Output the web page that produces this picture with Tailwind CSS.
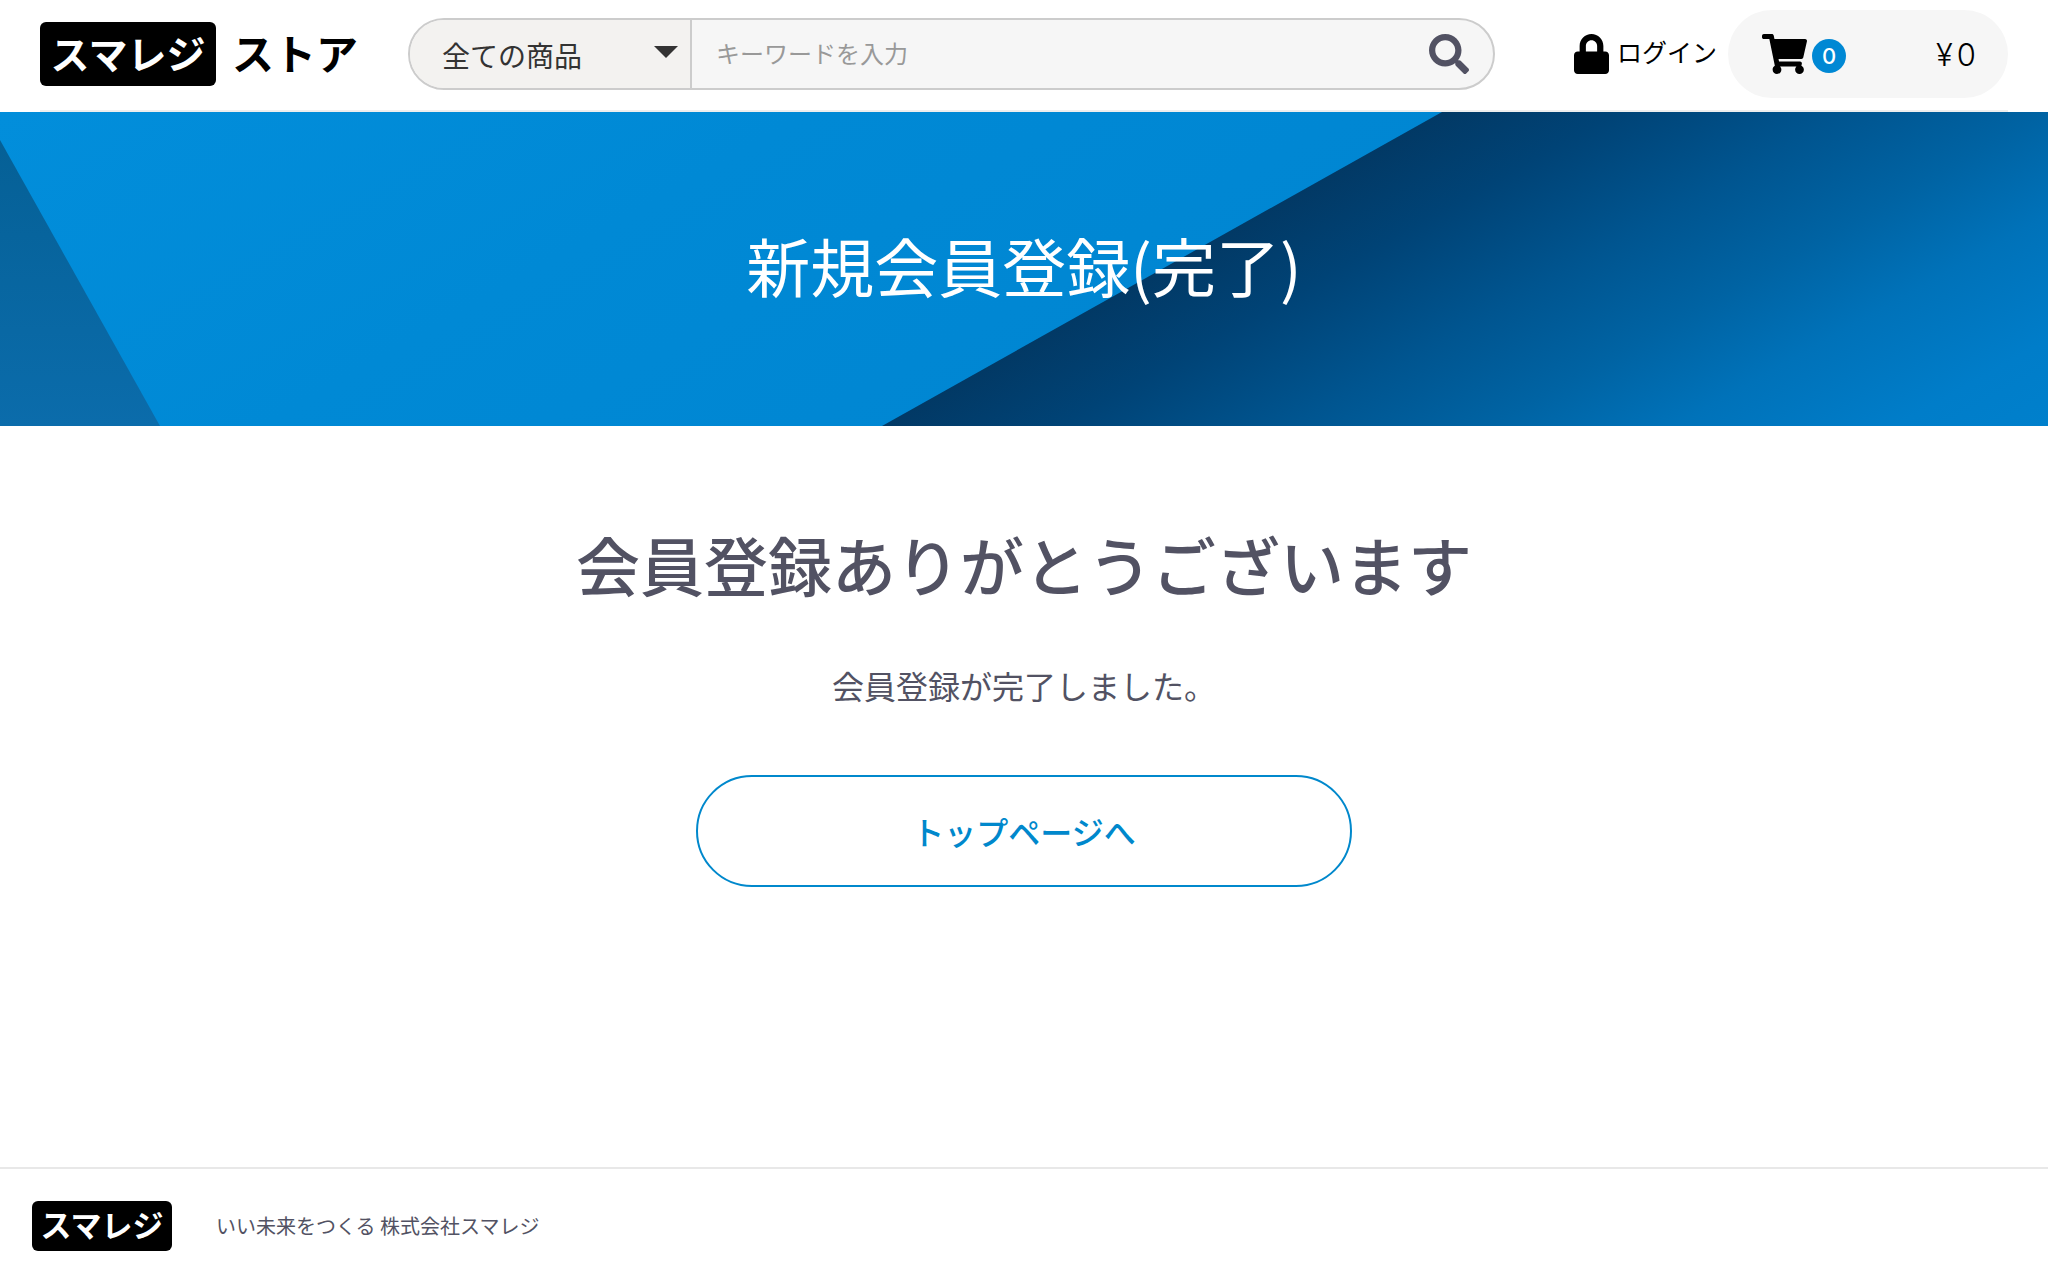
<!doctype html>
<html lang="ja">

<head>
	<meta charset="UTF-8">
	<meta name="viewport" content="width=device-width, initial-scale=1.0">
	<title>新規会員登録(完了) | スマレジ ストア</title>
	<script src="https://cdn.jsdelivr.net/npm/@tailwindcss/browser@4"></script>
</head>

<body class="flex min-h-screen flex-col bg-white font-['Noto_Sans_CJK_JP',sans-serif] text-[#525263]">
	<header class="mx-10 flex h-28 items-start border-b-2 border-[#eee] text-black">
		<!--logo-->
		<a href="#" class="mt-[22px] flex w-[368px] shrink-0 items-start gap-4 text-[42px] leading-[60px] font-bold">
			<span class="h-16 w-44 rounded-md bg-black text-center text-[39px] text-white">スマレジ</span>
			<span>ストア</span>
		</a>
		<!--product search-->
		<form class="mt-[18px] flex h-[72px] flex-1 overflow-hidden rounded-full border-2 border-[#ccc] bg-[#f6f6f6]">
			<div class="relative w-[282px] shrink-0 border-r-2 border-[#ccc] bg-[#f3f2f0]">
				<select aria-label="カテゴリ" class="h-full w-full appearance-none pt-0.5 pl-8 text-[28px] text-[#333] outline-none">
					<option>全ての商品</option>
				</select>
				<svg class="pointer-events-none absolute top-[26px] right-3 h-3 w-6 fill-[#333]" viewBox="0 0 24 12"><path d="M0 0h24L12 12z"/></svg>
			</div>
			<input type="search" aria-label="キーワード" placeholder="キーワードを入力" class="min-w-0 flex-1 px-6 pb-0.5 text-[24px] outline-none placeholder:text-[#999]">
			<button type="button" aria-label="検索" class="w-[72px] shrink-0 pr-4">
				<svg class="mx-auto h-10 w-10 fill-[#525263]" viewBox="0 0 512 512"><path d="M505 442.700 405.300 343c-4.500-4.500-10.600-7-17-7H372c27.600-35.300 44-79.700 44-128C416 93.100 322.900 0 208 0S0 93.100 0 208s93.100 208 208 208c48.300 0 92.700-16.400 128-44v16.300c0 6.400 2.500 12.500 7 17l99.700 99.700c9.400 9.400 24.600 9.400 33.900 0l28.300-28.300c9.400-9.400 9.400-24.600.1-34zM208 336c-70.700 0-128-57.200-128-128 0-70.700 57.200-128 128-128 70.700 0 128 57.200 128 128 0 70.700-57.200 128-128 128z"/></svg>
			</button>
		</form>
		<!--login and cart-->
		<a href="#" class="mt-[34px] ml-[79px] flex h-10 w-[154px] shrink-0 items-center gap-2 text-[25px]">
			<svg class="h-10 w-[35px] shrink-0" viewBox="0 0 448 512"><path d="M400 224h-24v-72C376 68.200 307.800 0 224 0S72 68.200 72 152v72H48c-26.500 0-48 21.500-48 48v192c0 26.500 21.500 48 48 48h352c26.500 0 48-21.500 48-48V272c0-26.500-21.500-48-48-48zm-104 0H152v-72c0-39.700 32.300-72 72-72s72 32.300 72 72v72z"/></svg>
			<span class="pb-1 whitespace-nowrap">ログイン</span>
		</a>
		<a href="#" class="mt-[10px] flex h-[88px] w-[280px] shrink-0 items-center rounded-full bg-[#f6f6f6] pr-8 pl-[34px] font-[Inter,sans-serif]">
			<svg class="h-10 w-[45px]" viewBox="0 0 576 512"><path d="M528.100 301.300l47.300-208C578.800 78.300 567.400 64 552 64H159.200l-9.200-44.800C147.800 8 137.900 0 126.500 0H24C10.700 0 0 10.700 0 24v16c0 13.300 10.700 24 24 24h69.900l70.200 343.400C147.300 417.100 136 435.200 136 456c0 30.900 25.100 56 56 56s56-25.100 56-56c0-15.700-6.400-29.800-16.800-40h209.600C430.400 426.200 424 440.300 424 456c0 30.900 25.100 56 56 56s56-25.100 56-56c0-22.200-12.900-41.300-31.600-50.400l5.500-24.300c3.400-15-8-29.300-23.400-29.300H218.100l-6.500-32h293.100c11.200 0 20.900-7.800 23.400-18.700z"/></svg>
			<span class="mt-1 ml-[5px] h-[34px] w-[34px] rounded-full bg-[#0088d4] text-center text-[22px] leading-[34px] font-medium text-white">0</span>
			<span class="mt-0.5 ml-auto text-[31px] font-light"><span class="mr-1">¥</span>0</span>
		</a>
	</header>

	<!--page title over the blue banner-->
	<div class="relative flex h-[314px] items-center justify-center bg-[#0089d5] pb-2.5">
		<svg class="absolute inset-0 h-full w-full" viewBox="0 0 2048 314" preserveAspectRatio="none">
			<defs>
				<linearGradient id="sky" gradientUnits="userSpaceOnUse" x1="0" y1="0" x2="400" y2="700">
					<stop offset="0" stop-color="#028edb"/>
					<stop offset=".5" stop-color="#0089d5"/>
					<stop offset="1" stop-color="#0086d2"/>
				</linearGradient>
				<linearGradient id="shade" gradientUnits="userSpaceOnUse" x1="882" y1="314" x2="1161" y2="811">
					<stop offset="0" stop-color="#023965"/>
					<stop offset=".15" stop-color="#004376"/>
					<stop offset=".35" stop-color="#005590"/>
					<stop offset=".52" stop-color="#0063a3"/>
					<stop offset=".68" stop-color="#0072b9"/>
					<stop offset=".87" stop-color="#007dc9"/>
					<stop offset="1" stop-color="#0080cc"/>
				</linearGradient>
				<linearGradient id="corner" x1="0" y1="0" x2="0" y2="1">
					<stop offset="0" stop-color="#056096"/>
					<stop offset="1" stop-color="#0b6cab"/>
				</linearGradient>
			</defs>
			<path fill="url(#sky)" d="M0 0h2048v314H0z"/>
			<path fill="url(#shade)" d="M1442 0h606v314H882z"/>
			<path fill="url(#corner)" d="M0 28l160 286H0z"/>
		</svg>
		<h1 class="relative text-[64px] leading-[72px] text-white">新規会員登録(完了)</h1>
	</div>

	<main class="flex flex-col items-center pt-[92px] text-center">
		<h2 class="text-[64px] leading-[90px] font-medium">会員登録ありがとうございます</h2>
		<p class="mt-[49px] text-[32px] leading-[56px]">会員登録が完了しました。</p>
		<a href="#" class="mt-[62px] h-28 w-[656px] rounded-full border-2 border-[#0088cc] text-[32px] leading-[108px] font-medium text-[#0088cc]">トップページへ</a>
	</main>

	<footer class="mt-auto flex h-[116px] items-center border-t-2 border-[#e8e8e8] px-8">
		<a href="#" class="h-[50px] w-[140px] rounded-md bg-black text-center text-[31px] leading-[46px] font-bold text-white">スマレジ</a>
		<p class="ml-11 text-[20px]">いい未来をつくる 株式会社スマレジ</p>
	</footer>
</body>

</html>
